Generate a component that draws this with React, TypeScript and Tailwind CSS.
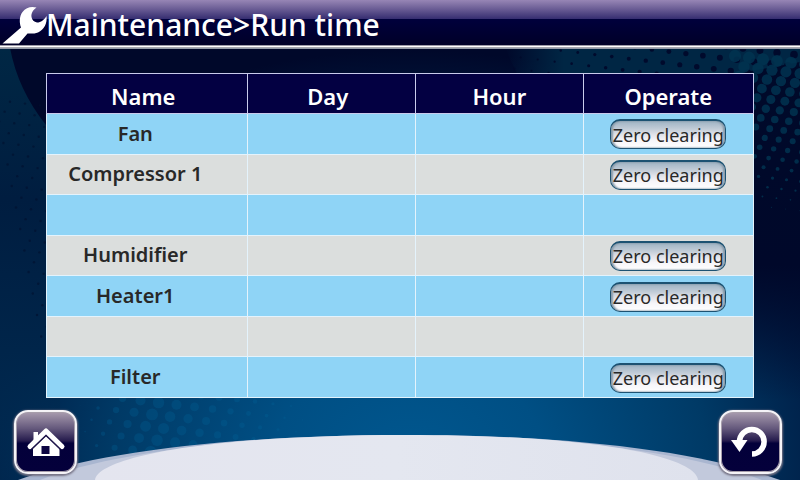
import React from "react";

type Row = { name: string; clearable: boolean };

const rows: Row[] = [
  { name: "Fan", clearable: true },
  { name: "Compressor 1", clearable: true },
  { name: "", clearable: false },
  { name: "Humidifier", clearable: true },
  { name: "Heater1", clearable: true },
  { name: "", clearable: false },
  { name: "Filter", clearable: true },
];

type Dot = { x: number; y: number; r: number };

// Tilted, staggered halftone field whose dots follow the given radius function.
function halftone(
  x0: number,
  y0: number,
  x1: number,
  y1: number,
  step: number,
  radius: (x: number, y: number) => number,
): Dot[] {
  const dots: Dot[] = [];
  let line = 0;
  for (let y = y0; y < y1; y += step * 0.7) {
    for (let x = x0; x < x1; x += step) {
      const px = x + (line % 2 ? step / 2 : 0) + (y - y0) * 0.2;
      const py = y + (px - x0) * 0.12;
      const r = radius(px, py);
      if (r > 0.3) dots.push({ x: px, y: py, r });
    }
    line += 1;
  }
  return dots;
}

const darkDots = halftone(505, 20, 800, 78, 17, (x) => (x < 540 ? 1 : 1 + (x - 540) / 90));
const rightDots = halftone(735, 56, 810, 225, 14, (_x, y) => 6 - (y - 60) / 27);
const lowerDots = halftone(75, 380, 300, 450, 18, (x) => (x < 150 ? (x - 75) / 13 : 6 - (x - 150) / 28));
const leftDots = halftone(-5, 100, 50, 340, 15, () => 1.2);

function Backdrop() {
  return (
    <svg
      className="absolute inset-0 h-full w-full"
      viewBox="0 0 800 480"
      preserveAspectRatio="none"
      aria-hidden="true"
    >
      <defs>
        <radialGradient
          id="glow"
          gradientUnits="userSpaceOnUse"
          cx="0"
          cy="0"
          r="1"
          gradientTransform="translate(410 460) scale(540 410)"
        >
          <stop offset="0" stopColor="#00578f" />
          <stop offset="0.25" stopColor="#004f84" />
          <stop offset="0.55" stopColor="#003a66" />
          <stop offset="0.75" stopColor="#00214a" />
          <stop offset="1" stopColor="#00082a" />
        </radialGradient>
        <linearGradient id="sweep" x1="0" y1="0" x2="0" y2="1">
          <stop offset="0" stopColor="#002744" />
          <stop offset="0.35" stopColor="#001d40" />
          <stop offset="0.7" stopColor="#00254a" />
          <stop offset="1" stopColor="#003158" stopOpacity="0.4" />
        </linearGradient>
        <linearGradient id="band" x1="0" y1="0" x2="1" y2="0">
          <stop offset="0" stopColor="#002644" stopOpacity="0" />
          <stop offset="0.2" stopColor="#002644" />
          <stop offset="1" stopColor="#002644" />
        </linearGradient>
        <linearGradient id="shade" x1="0" y1="0" x2="0" y2="1">
          <stop offset="0" stopColor="#000a2a" />
          <stop offset="0.6" stopColor="#00082a" />
          <stop offset="1" stopColor="#00082a" stopOpacity="0" />
        </linearGradient>
        <linearGradient id="mound" x1="0" y1="0" x2="1" y2="0">
          <stop offset="0" stopColor="#e4e5ef" />
          <stop offset="0.5" stopColor="#e4e7f0" />
          <stop offset="1" stopColor="#dfe2ed" />
        </linearGradient>
      </defs>
      <rect width="800" height="480" fill="url(#glow)" />
      <path d="M0 48H10Q18 90 46 125H60V480H0Z" fill="url(#sweep)" />
      <path d="M505 48H800V80H520Z" fill="url(#band)" />
      <g fill="#000a2c">
        {darkDots.map((d, i) => (
          <circle key={i} cx={d.x} cy={d.y} r={d.r} />
        ))}
      </g>
      <path d="M745 72L800 62V400H745Z" fill="url(#shade)" />
      <g fill="#003350" opacity="0.85">
        {rightDots.map((d, i) => (
          <circle key={i} cx={d.x} cy={d.y} r={d.r} />
        ))}
      </g>
      <g fill="#00102e" opacity="0.6">
        {leftDots.map((d, i) => (
          <circle key={i} cx={d.x} cy={d.y} r={d.r} />
        ))}
      </g>
      <g fill="#00659a" opacity="0.28">
        {lowerDots.map((d, i) => (
          <circle key={i} cx={d.x} cy={d.y} r={d.r} />
        ))}
      </g>
      <path d="M18 480C100 451 240 435 405 435S700 451 780 480Z" fill="#a9b6d0" />
      <path d="M40 480C110 452 250 436 405 436S690 452 762 480Z" fill="#c2c9dc" />
      <path d="M95 480C98 457 210 435 405 435S695 457 698 480Z" fill="url(#mound)" />
    </svg>
  );
}

function WrenchIcon() {
  return (
    <svg className="h-[45px] w-[46px] shrink-0 overflow-visible" viewBox="0 0 46 45" aria-hidden="true">
      <path
        d="M2.5 43.5L21 27.5C19 22 19.500 16 22.500 12C26 7.500 31 6 36.500 7.500C33 10 31 13 31.500 17C32 20 34 22 37 22.500C41 22.500 44 20 46.500 16C47.500 23 44 30 38 32.500C34 34 30 33.500 27.500 33.500L19 43.500Z"
        fill="#fff"
      />
    </svg>
  );
}

function HomeIcon() {
  return (
    <svg className="h-[30px] w-[38px] overflow-visible" viewBox="0 0 38 30" aria-hidden="true">
      <path d="M6.500 14V5H11V10Z" fill="#fff" />
      <path
        d="M3 19.500L19 4L35 19.500"
        fill="none"
        stroke="#fff"
        strokeWidth="5"
        strokeLinecap="round"
        strokeLinejoin="round"
      />
      <path d="M19 9L32.500 21V29H6V21Z" fill="#fff" />
      <path d="M14.500 19H22.500V27H14.500Z" fill="#0d0543" />
      <path d="M4.500 22.500L19 8.500L33.500 22.500" fill="none" stroke="#1b1147" strokeWidth="1.2" />
    </svg>
  );
}

function BackIcon() {
  return (
    <svg className="h-[32px] w-[38px] overflow-visible" viewBox="0 0 38 32" aria-hidden="true">
      <path d="M7.500 15.500A12.300 12.300 0 1 1 20 28" fill="none" stroke="#fff" strokeWidth="5.5" />
      <path d="M-1 14H15.500L7.500 26Z" fill="#fff" />
    </svg>
  );
}

function NavButton({ label, children }: { label: string; children: React.ReactNode }) {
  return (
    <button
      type="button"
      aria-label={label}
      className="flex h-16 w-[63px] items-center justify-center rounded-[14px] border-2 border-[#f5f3f7] bg-[linear-gradient(#a99caf_0%,#63577b_28%,#251b4d_48%,#03003a_52%,#04003b_100%)] shadow-[inset_0_0_0_1px_#a79eab,0_1px_2px_1px_#777486]"
    >
      {children}
    </button>
  );
}

function ClearButton({ target }: { target: string }) {
  return (
    <button
      type="button"
      aria-label={`Zero clearing ${target}`}
      className="mx-auto mt-px flex h-[30px] w-[116px] items-center justify-center rounded-[10px] border border-t-2 border-[#1c5272] bg-[linear-gradient(#9eb3c3_0%,#c0cbd6_28%,#e0e2e9_50%,#f6f5f9_72%,#ffffff_100%)] text-lg leading-6 whitespace-nowrap text-[#282828] shadow-[inset_2px_0_2px_#8799a8,inset_-2px_0_2px_#8799a8]"
    >
      Zero clearing
    </button>
  );
}

export default function App() {
  return (
    <div className="relative flex min-h-screen flex-col overflow-hidden bg-[#00082a] font-['Noto_Sans','Open_Sans',sans-serif]">
      <Backdrop />
      <header className="relative flex h-[49px] items-start border-b border-[#929aa8] bg-[linear-gradient(#9786b5_0px,#655891_10px,#352d70_19px,#00003c_19px,#000028_45px,#9c9aa8_45px,#9c9aa8_46px,#fff_46px,#fff_47px,#a8a8b0_47px)]">
        <WrenchIcon />
        <h1 className="text-[30px] leading-[50px] font-medium text-white">Maintenance&gt;Run time</h1>
      </header>

      <main className="relative px-[46px] pt-6">
        <table className="h-[325px] w-full table-fixed border-collapse border border-[#e4f3fc] text-center">
          <colgroup>
            <col className="w-[28.5%]" />
            <col className="w-[23.7%]" />
            <col className="w-[23.7%]" />
            <col className="w-[24.1%]" />
          </colgroup>
          <thead>
            <tr className="h-10 bg-[#030042] text-[22px] leading-7 text-white">
              <th className="border border-[#c9cbec] p-0 pt-1 pr-2 font-semibold">Name</th>
              <th className="border border-[#c9cbec] p-0 pt-1 pr-2 font-semibold">Day</th>
              <th className="border border-[#c9cbec] p-0 pt-1 font-semibold">Hour</th>
              <th className="border border-[#c9cbec] p-0 pt-1 font-semibold">Operate</th>
            </tr>
          </thead>
          <tbody>
            {rows.map((row, i) => (
              <tr key={i} className="h-10 text-xl leading-6 text-[#282828] odd:bg-[#8fd4f6] even:bg-[#dbdedd]">
                <td className="border border-[#e4f3fc] p-0 pr-6 font-semibold">{row.name}</td>
                <td className="border border-[#e4f3fc] p-0" />
                <td className="border border-[#e4f3fc] p-0" />
                <td className="border border-[#e4f3fc] p-0">
                  {row.clearable && <ClearButton target={row.name} />}
                </td>
              </tr>
            ))}
          </tbody>
        </table>
      </main>

      <nav className="relative mt-auto flex justify-between pr-[18px] pb-[6px] pl-[14px]">
        <NavButton label="Home">
          <HomeIcon />
        </NavButton>
        <NavButton label="Back">
          <BackIcon />
        </NavButton>
      </nav>
    </div>
  );
}
